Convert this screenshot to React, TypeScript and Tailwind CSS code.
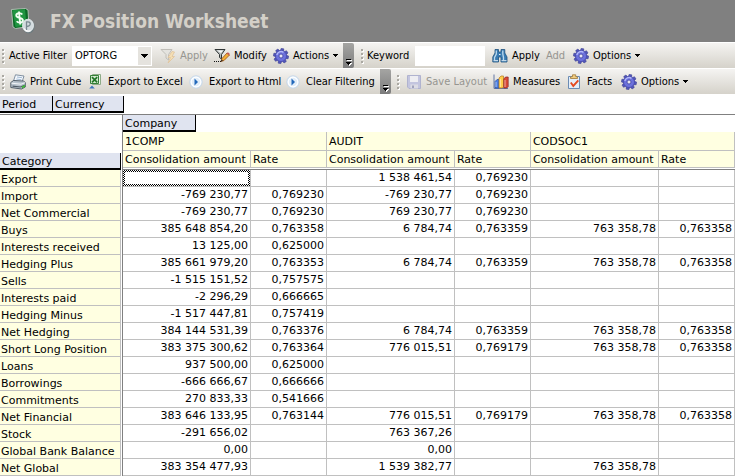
import type { ReactNode } from "react";

const UI = "font-['DejaVu_Sans_Condensed','DejaVu_Sans',sans-serif]";

type Row = [string, string, string, string, string, string, string];

const rows: Row[] = [
  ["Export", "", "", "1 538 461,54", "0,769230", "", ""],
  ["Import", "-769 230,77", "0,769230", "-769 230,77", "0,769230", "", ""],
  ["Net Commercial", "-769 230,77", "0,769230", "769 230,77", "0,769230", "", ""],
  ["Buys", "385 648 854,20", "0,763358", "6 784,74", "0,763359", "763 358,78", "0,763358"],
  ["Interests received", "13 125,00", "0,625000", "", "", "", ""],
  ["Hedging Plus", "385 661 979,20", "0,763353", "6 784,74", "0,763359", "763 358,78", "0,763358"],
  ["Sells", "-1 515 151,52", "0,757575", "", "", "", ""],
  ["Interests paid", "-2 296,29", "0,666665", "", "", "", ""],
  ["Hedging Minus", "-1 517 447,81", "0,757419", "", "", "", ""],
  ["Net Hedging", "384 144 531,39", "0,763376", "6 784,74", "0,763359", "763 358,78", "0,763358"],
  ["Short Long Position", "383 375 300,62", "0,763364", "776 015,51", "0,769179", "763 358,78", "0,763358"],
  ["Loans", "937 500,00", "0,625000", "", "", "", ""],
  ["Borrowings", "-666 666,67", "0,666666", "", "", "", ""],
  ["Commitments", "270 833,33", "0,541666", "", "", "", ""],
  ["Net Financial", "383 646 133,95", "0,763144", "776 015,51", "0,769179", "763 358,78", "0,763358"],
  ["Stock", "-291 656,02", "", "763 367,26", "", "", ""],
  ["Global Bank Balance", "0,00", "", "0,00", "", "", ""],
  ["Net Global", "383 354 477,93", "", "1 539 382,77", "", "763 358,78", ""],
];

const companies = ["1COMP", "AUDIT", "CODSOC1"];

function Svg({ children }: { children: ReactNode }) {
  return (
    <svg width="16" height="16" viewBox="0 0 16 16" className="shrink-0" aria-hidden="true">
      {children}
    </svg>
  );
}

function AppLogo() {
  return (
    <svg width="24" height="26" viewBox="0 0 24 26" className="shrink-0" aria-hidden="true">
      <path d="M.5 1.500L14.500 .5L17 2L18 18.500L4.500 20.500L2 19Z" fill="#0b6a26" stroke="#b9c6bb" strokeWidth=".9" />
      <path d="M1.500 2.200L14 1.300L15.500 17.500L4.500 19Z" fill="#1f9540" />
      <path d="M11.300 6.500C9.500 4.300 5 5 5.300 7.600C5.600 10.500 11.700 9.300 11.900 12.300C12 15 7.300 15.400 5.700 13.200M8 3.500L9.200 16.500" fill="none" stroke="#f2fff2" strokeWidth="1.900" />
      <ellipse cx="17.800" cy="18.500" rx="5.800" ry="7" fill="#6f7c80" />
      <ellipse cx="17" cy="17.500" rx="5.500" ry="6.300" fill="#d3dbde" stroke="#eef3f4" strokeWidth=".8" />
      <path d="M15.500 22V14C20 12.800 20.800 18 15.800 18.500" fill="none" stroke="#7a8990" strokeWidth="1.300" />
      <path d="M13 20.500Q15.500 24.500 19.500 22.500" fill="none" stroke="#fff" strokeWidth="1.200" />
    </svg>
  );
}

function GearIcon() {
  return (
    <Svg>
      <g fill="#5357b8" stroke="#34388f" strokeWidth=".5">
        {[0, 45, 90, 135, 180, 225, 270, 315].map((a) => (
          <path key={a} d="M6.300 3.500L6.800 .5H9.500L9.900 3.500Z" transform={`rotate(${a + 10} 8 8)`} />
        ))}
      </g>
      <circle cx="8" cy="8" r="5.500" fill="#6c71dc" stroke="#4448a8" strokeWidth=".7" />
      <path d="M3.800 7A4.400 4.400 0 0 1 10.500 4.300" fill="none" stroke="#b4b9fa" strokeWidth="1.400" />
      <circle cx="8" cy="8" r="2" fill="#e7e6f2" stroke="#3f439e" strokeWidth=".8" />
    </Svg>
  );
}

function FilterApplyIcon() {
  return (
    <Svg>
      <path d="M1 1.500H12L8.500 6.500V12L6 10V6.500Z" fill="#e4e3df" stroke="#c0beb8" />
      <path d="M12 3.500L8 9.500H10.500L8 15L14.500 8.500H12L14.500 4Z" fill="#f5dfb4" stroke="#dfc39a" strokeWidth=".8" />
    </Svg>
  );
}

function FilterEditIcon() {
  return (
    <Svg>
      <path d="M1 1.500H11L7.500 6.500V11L5.500 9.500V6.500Z" fill="#b8bcbc" stroke="#303636" />
      <path d="M3 2.500H9L7 5Z" fill="#f5f7f7" />
      <path d="M0 13.500H8" stroke="#111" strokeDasharray="1 1" />
      <path d="M7 13.500L8 10.500L13 5L15.500 7L10 12.500Z" fill="#f3ae37" stroke="#96511a" strokeWidth=".8" />
      <path d="M12.500 5.500L13.500 4.500Q15 4 15.700 6L15 7.500Z" fill="#c55b55" />
      <path d="M7 13.500L7.500 11.500L9 12.800Z" fill="#222" />
    </Svg>
  );
}

function PrinterIcon() {
  return (
    <Svg>
      <path d="M5.500 .8L14 2L12 8L3.500 7Z" fill="#f4f8fd" stroke="#66798d" strokeWidth=".8" />
      <path d="M7 3L12 3.700M6.300 5L11.300 5.700" stroke="#8eabc8" strokeWidth=".8" />
      <path d="M.8 8.500L3.500 6.500L13.500 7L15.300 8.500V13L11.500 15L.8 13.500Z" fill="#b7c2cc" stroke="#47535f" strokeWidth=".9" />
      <path d="M1.500 9.200L11 10.200L15 8.700" stroke="#f4f6f8" fill="none" />
      <path d="M2.500 12.200L10.500 13L14.500 11.300" stroke="#4f5b66" strokeWidth="1.200" fill="none" />
      <path d="M11.800 12.300L15 10.800V13L11.800 14.500Z" fill="#43b43d" />
    </Svg>
  );
}

function ExcelIcon() {
  return (
    <Svg>
      <path d="M4.500 .5H12.500V10.500H4.500Z" fill="#eef5eb" stroke="#8dab87" />
      <path d="M2.500 1.500H10.500V9.500H2.500Z" fill="#d5ead1" stroke="#368039" />
      <path d="M4 3.200L9.200 8.300M9.200 3.200L4 8.300" stroke="#217527" strokeWidth="1.700" />
      <path d="M4 11.500L1.200 14.500H6.800Z" fill="#3d76bd" />
    </Svg>
  );
}

function PlayIcon() {
  return (
    <Svg>
      <circle cx="7" cy="8" r="6.200" fill="#e1edf9" stroke="#c3d5e8" strokeWidth=".9" />
      <circle cx="7" cy="8" r="4.800" fill="none" stroke="#fff" strokeWidth="1.200" />
      <path d="M5.500 4.500L9 8L5.500 11.500Z" fill="#2268ba" />
    </Svg>
  );
}

function BinocularsIcon() {
  return (
    <Svg>
      <path d="M3 1.500H6.500V4H9V1.500H12.800V5L15 9V14H9V9H6.500V14H.8V9L3 5Z" fill="#397bb2" stroke="#1e527d" strokeWidth=".8" />
      <path d="M4.300 2.500V6L2.500 9.500V12M10.800 2.500V6L11.500 9.500V12" fill="none" stroke="#bcdaee" strokeWidth="1.300" />
      <path d="M1.500 12.700H6M9.500 12.700H14.500M7 6.500H8.500" stroke="#e5f1f8" />
    </Svg>
  );
}

function SaveIcon() {
  return (
    <Svg>
      <path d="M1.500 1.500H14.500V14.500H3L1.500 13Z" fill="#c3c5df" stroke="#b0b3cf" />
      <path d="M4 2H12V8H4Z" fill="#eeeef2" />
      <path d="M4.500 10.500H12V14.500H4.500Z" fill="#dcdce4" />
      <path d="M6 11.500H8V14H6Z" fill="#9fa2bd" />
    </Svg>
  );
}

function ChartIcon() {
  return (
    <Svg>
      <path d="M1 .5V14.500H15" fill="none" stroke="#6478a6" />
      <path d="M2 7.500L4 5.500H6V14H2Z" fill="#497ee4" stroke="#264d9e" strokeWidth=".7" />
      <path d="M6 4L8 2H10.500V12.500L9.500 14H6Z" fill="#ffcc4b" stroke="#b17a21" strokeWidth=".7" />
      <path d="M10.800 5L12.500 3H15.200V12.500L13.800 14H10.800Z" fill="#da4936" stroke="#8b241d" strokeWidth=".7" />
      <path d="M3 8V13M7.300 5V13M12 6V13" stroke="#fff" strokeOpacity=".55" />
    </Svg>
  );
}

function FactsIcon() {
  return (
    <Svg>
      <path d="M1.500 2.500H12.500V14.500H1.500Z" fill="#e4eef9" stroke="#6b8cb4" />
      <path d="M3.500 4.500H10.500V3L8.700 2.500V.8H5.500V2.500L3.500 3Z" fill="#f1cd80" stroke="#a17836" strokeWidth=".8" />
      <path d="M3.800 8.500L6.300 12L11.300 6.300" fill="none" stroke="#e54a20" strokeWidth="1.900" />
    </Svg>
  );
}

function Caret() {
  return (
    <svg width="5" height="3" viewBox="0 0 5 3" className="shrink-0" aria-hidden="true" shapeRendering="crispEdges">
      <path d="M0 0H5V1H4V2H3V3H2V2H1V1H0Z" fill="#000" />
    </svg>
  );
}

function Grip() {
  return (
    <span className="flex w-[3px] shrink-0 flex-col gap-[2px]" aria-hidden="true">
      {[0, 1, 2, 3].map((n) => (
        <span key={n} className="size-[2px] bg-[#aaa8a2] shadow-[1px_1px_0_#fff]" />
      ))}
    </span>
  );
}

function Tool({ icon, label, disabled, menu, width }: { icon?: ReactNode; label: string; disabled?: boolean; menu?: boolean; width: string }) {
  return (
    <button type="button" disabled={disabled} className={`flex h-[25px] shrink-0 items-center gap-[4px] whitespace-nowrap text-black disabled:text-[#969590] ${width}`}>
      {icon}
      <span>{label}</span>
      {menu && <Caret />}
    </button>
  );
}

function Overflow() {
  return (
    <button type="button" aria-label="More buttons" className="flex h-[25px] w-[11px] shrink-0 items-end justify-center rounded-r-[2px] bg-linear-to-b from-[#a5a5a3] to-[#7c7c7c] pb-[2px]">
      <svg width="6" height="7" viewBox="0 0 6 7" shapeRendering="crispEdges" aria-hidden="true">
        <path d="M1 1H6V2H1ZM1 4H6V5H5V6H4V7H3V6H2V5H1Z" fill="#fff" />
        <path d="M0 0H5V1H0ZM0 3H5V4H4V5H3V6H2V5H1V4H0Z" fill="#000" />
      </svg>
    </button>
  );
}

const barClass = "flex h-[25px] items-center overflow-hidden bg-linear-to-b from-[#f5f4f2] to-[#d5d2ca]";

function Toolbars() {
  return (
    <div className={`flex flex-col gap-px bg-white pt-px text-[11px] leading-[14px] ${UI}`}>
      <div role="toolbar" aria-label="Filter" className={barClass}>
        <div className="flex w-[354px] shrink-0 items-center pl-[2px]">
          <Grip />
          <label htmlFor="filter" className="w-[67px] shrink-0 pl-[4px] whitespace-nowrap">Active Filter</label>
          <div className="relative mr-[8px] w-[80px] shrink-0">
            <select id="filter" className="h-[20px] w-full appearance-none bg-white pl-[3px] text-[11px] leading-[14px] outline-none">
              <option>OPTORG</option>
            </select>
            <span className="pointer-events-none absolute inset-y-px right-px flex w-[13px] items-center justify-center bg-[#e5e3de]">
              <svg width="7" height="4" viewBox="0 0 7 4" shapeRendering="crispEdges" aria-hidden="true">
                <path d="M0 0H7V1H6V2H5V3H4V4H3V3H2V2H1V1H0Z" />
              </svg>
            </span>
          </div>
          <Tool icon={<FilterApplyIcon />} label="Apply" disabled width="w-[54px]" />
          <Tool icon={<FilterEditIcon />} label="Modify" width="w-[59px]" />
          <Tool icon={<GearIcon />} label="Actions" menu width="w-[70px]" />
          <Overflow />
        </div>
        <div className="flex items-center pl-[7px]">
          <Grip />
          <label htmlFor="keyword" className="w-[51px] shrink-0 pl-[3px]">Keyword</label>
          <input id="keyword" type="text" className="mr-[7px] h-[20px] w-[70px] shrink-0 bg-white px-[3px] outline-none" />
          <Tool icon={<BinocularsIcon />} label="Apply" width="w-[54px]" />
          <Tool label="Add" disabled width="w-[27px]" />
          <Tool icon={<GearIcon />} label="Options" menu width="w-[70px]" />
        </div>
      </div>
      <div role="toolbar" aria-label="Cube" className={barClass}>
        <div className="flex w-[391px] shrink-0 items-center pl-[2px]">
          <Grip />
          <span className="w-[5px] shrink-0" />
          <Tool icon={<PrinterIcon />} label="Print Cube" width="w-[78px]" />
          <Tool icon={<ExcelIcon />} label="Export to Excel" width="w-[101px]" />
          <Tool icon={<PlayIcon />} label="Export to Html" width="w-[97px]" />
          <Tool icon={<PlayIcon />} label="Clear Filtering" width="w-[94px]" />
          <Overflow />
        </div>
        <div className="flex items-center pl-[6px]">
          <Grip />
          <span className="w-[6px] shrink-0" />
          <Tool icon={<SaveIcon />} label="Save Layout" disabled width="w-[87px]" />
          <Tool icon={<ChartIcon />} label="Measures" width="w-[74px]" />
          <Tool icon={<FactsIcon />} label="Facts" width="w-[54px]" />
          <Tool icon={<GearIcon />} label="Options" menu width="w-[70px]" />
        </div>
      </div>
    </div>
  );
}

function Field({ label, width }: { label: string; width: string }) {
  return (
    <button type="button" className={`block h-[17px] border-r border-b-2 border-black bg-[#e0e4f0] pl-[2px] text-left leading-[17px] ${width}`}>
      {label}
    </button>
  );
}

const measureClass = "mb-px h-[17px] border-r border-b border-[#c0c0c0] bg-[#ffffe1] pl-[2px] leading-[18px]";

function Cube() {
  return (
    <div className="font-['DejaVu_Sans',Verdana,sans-serif] text-[11px] leading-[15px] text-black">
      <div className="flex h-[21px] items-start border-b border-[#808080] pt-[2px]">
        <Field label="Period" width="w-[53px]" />
        <Field label="Currency" width="w-[71px]" />
      </div>
      <table className="w-full min-w-[735px] table-fixed border-separate border-spacing-0">
        <colgroup>
          <col className="w-[123px]" />
          {companies.map((c) => [
            <col key={c + "a"} />,
            <col key={c + "r"} className="w-[76px]" />,
          ])}
        </colgroup>
        <thead>
          <tr className="h-[17px]">
            <td className="border-r border-[#808080] p-0" />
            <td colSpan={6} className="p-0"><Field label="Company" width="w-[73px]" /></td>
          </tr>
          <tr className="h-[19px]">
            <th rowSpan={2} scope="col" className="border-r border-[#808080] p-0 align-bottom font-normal">
              <Field label="Category" width="w-[121px]" />
            </th>
            {companies.map((c) => (
              <th key={c} colSpan={2} scope="colgroup" className="border-r border-b border-[#c0c0c0] bg-[#ffffe1] py-0 pr-0 pl-[2px] text-left font-normal">{c}</th>
            ))}
          </tr>
          <tr className="h-[19px]">
            {companies.map((c) => [
              <th key={c + "a"} scope="col" className="border-b border-[#808080] p-0 text-left font-normal whitespace-nowrap">
                <div className={measureClass}>Consolidation amount</div>
              </th>,
              <th key={c + "r"} scope="col" className="border-b border-[#808080] p-0 text-left font-normal">
                <div className={measureClass}>Rate</div>
              </th>,
            ])}
          </tr>
        </thead>
        <tbody>
          {rows.map(([name, ...values], r) => (
            <tr key={name} className="h-[17px]">
              <th scope="row" className="border-r border-[#808080] p-0 text-left font-normal whitespace-nowrap">
                <div className="mr-px h-[17px] border-r border-b border-[#c0c0c0] bg-[#ffffe1] pl-[1px] leading-[20px]">{name}</div>
              </th>
              {values.map((v, c) => (
                <td key={c} className="h-[17px] border-r border-b border-[#c0c0c0] p-0 text-right whitespace-nowrap">
                  {r === 0 && c === 0 ? (
                    <div className="h-[16px] bg-[repeating-conic-gradient(#000_0_25%,#fff_0_50%)] bg-size-[2px_2px] p-[2px]">
                      <div className="h-full bg-white" />
                    </div>
                  ) : (
                    <div className="h-[16px] pr-[2px] leading-[15px]">{v}</div>
                  )}
                </td>
              ))}
            </tr>
          ))}
        </tbody>
      </table>
    </div>
  );
}

export default function App() {
  return (
    <main className="min-h-screen overflow-hidden bg-white">
      <header className="flex h-[42px] items-center gap-[15px] bg-[#808080] pl-[11px]">
        <AppLogo />
        <h1 className={`text-[19px] leading-[24px] font-bold text-[#d4d0c8] ${UI}`}>FX Position Worksheet</h1>
      </header>
      <Toolbars />
      <Cube />
    </main>
  );
}
